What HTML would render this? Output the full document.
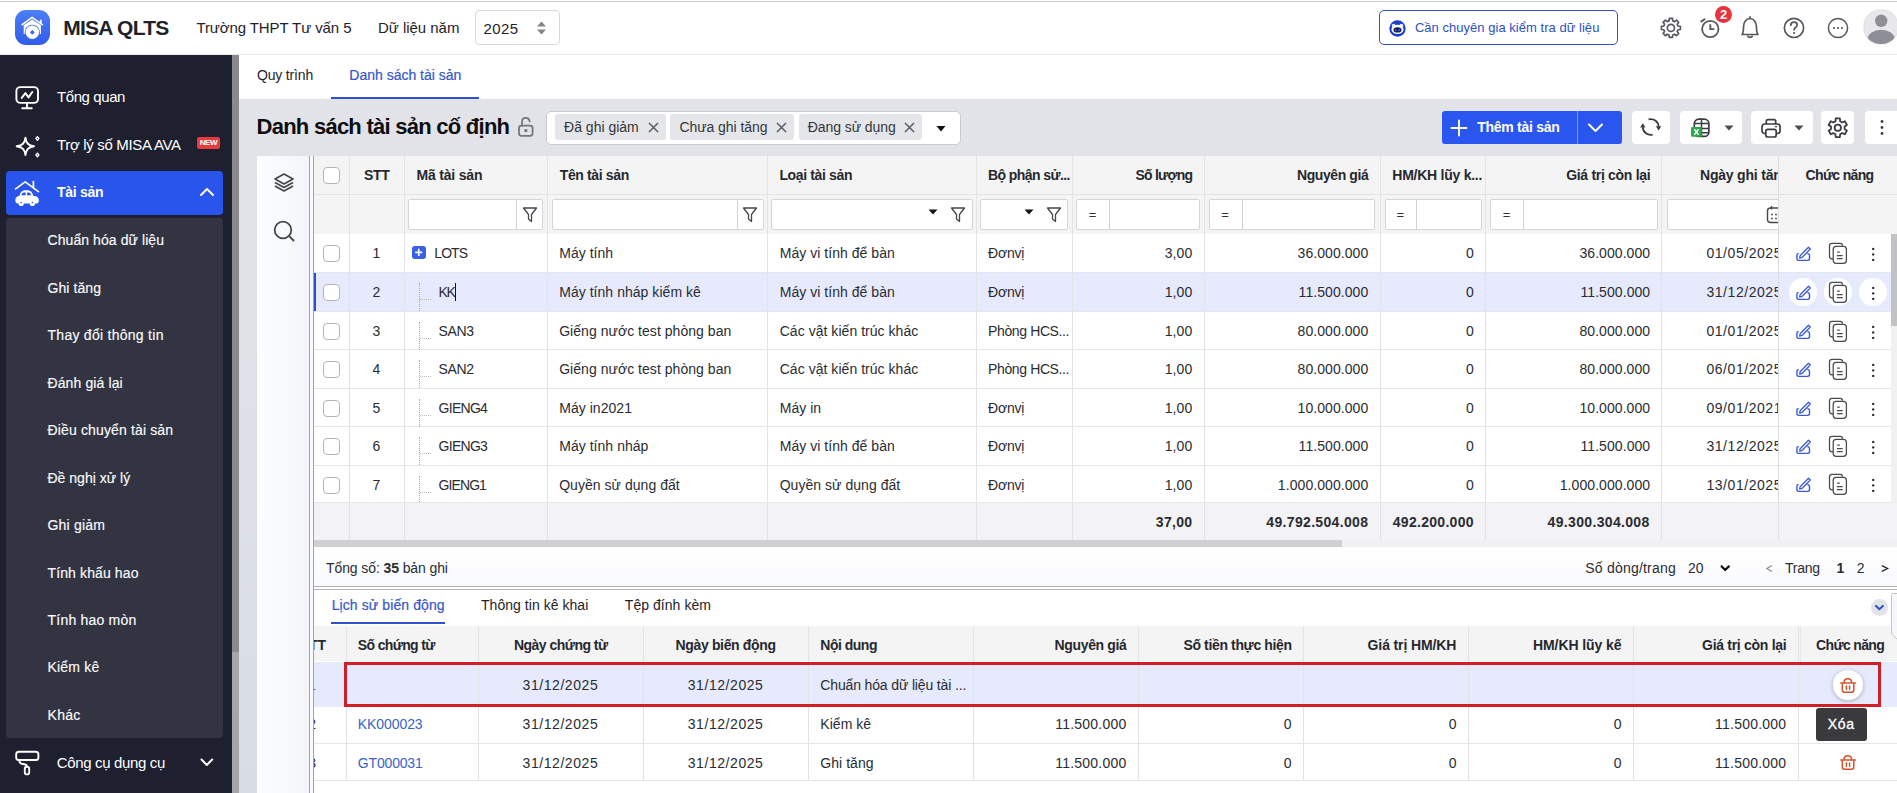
<!DOCTYPE html><html><head><meta charset="utf-8"><style>
html,body{margin:0;padding:0;width:1897px;height:793px;overflow:hidden;background:#fff;font-family:"Liberation Sans", sans-serif;position:relative}
.t{position:absolute;white-space:nowrap}
.b{position:absolute;box-sizing:border-box}
svg.b{overflow:visible}
</style></head><body>
<div class="b" style="left:0px;top:0px;width:1897px;height:54px;background:#fff"></div>
<div class="b" style="left:0px;top:1px;width:1897px;height:1px;background:#cfcfcf"></div>
<div class="b" style="left:0px;top:54px;width:1897px;height:1px;background:#e6e6e6"></div>
<div class="b" style="left:15.3px;top:10px;width:34.5px;height:34.5px;border-radius:11px;background:linear-gradient(180deg,#4d7ff7 0%,#2f5ceb 100%)"></div>
<svg class="b" style="left:15.3px;top:10px;" width="34.5" height="34.5" viewBox="0 0 34.5 34.5" fill="none"><path d="M7.2 14.6 L17.1 7.4 L27.3 14.6" stroke="#fff" stroke-width="1.7" stroke-linecap="round" stroke-linejoin="round"/>
<rect x="24.9" y="9.8" width="1.8" height="4" fill="#fff"/>
<path d="M8.7 15.2 L17.1 9.4 L25.9 15.2 V24 H8.7 Z" fill="#fff"/>
<circle cx="17.3" cy="22.3" r="7.6" fill="#3a66ee"/>
<circle cx="17.3" cy="22.3" r="6.7" fill="#fff"/>
<path d="M17.3 19.9 L19.7 22.3 L17.3 24.7 L14.9 22.3 Z" fill="#3a66ee"/></svg>
<div class="t" style="left:63.3px;top:17.02px;font-size:21px;line-height:21px;font-weight:700;color:#1f2229;letter-spacing:-0.756px;">MISA QLTS</div>
<div class="t" style="left:196.4px;top:20.20px;font-size:15px;line-height:15px;font-weight:400;color:#1f2229;letter-spacing:-0.096px;">Trường THPT Tư vấn 5</div>
<div class="t" style="left:378px;top:20.20px;font-size:15px;line-height:15px;font-weight:400;color:#1f2229;letter-spacing:-0.032px;">Dữ liệu năm</div>
<div class="b" style="left:474.5px;top:10px;width:85.0px;height:34.7px;border:1px solid #d9d9d9;border-radius:4px;background:#fff"></div>
<div class="t" style="left:483.6px;top:21.10px;font-size:15px;line-height:15px;font-weight:400;color:#1f2229;letter-spacing:0.356px;">2025</div>
<svg class="b" style="left:536px;top:20px;" width="11" height="16" viewBox="0 0 11 16" fill="none"><path d="M1 6.5 L5.5 1.5 L10 6.5 Z" fill="#858585"/><path d="M1 9.5 L5.5 14.5 L10 9.5 Z" fill="#858585"/></svg>
<div class="b" style="left:1379px;top:10px;width:239px;height:35px;border:1.5px solid #3552c4;border-radius:5px;background:#fff"></div>
<svg class="b" style="left:1389px;top:19.5px;" width="17" height="17" viewBox="0 0 17 17" fill="none"><circle cx="8.5" cy="8.5" r="8.2" fill="#1b40cf"/><circle cx="4.6" cy="5.6" r="1.9" fill="#e8eeff"/><circle cx="12.4" cy="5.6" r="1.9" fill="#e8eeff"/><ellipse cx="8.5" cy="9.4" rx="6" ry="4.7" fill="#fff"/><ellipse cx="8.5" cy="9.9" rx="4" ry="2.6" fill="#0c1a66"/><path d="M5.9 10.6 Q6.7 9.2 7.5 10.6 M9.5 10.6 Q10.3 9.2 11.1 10.6" stroke="#c8d4ff" stroke-width="0.8"/></svg>
<div class="t" style="left:1414.9px;top:21.20px;font-size:13px;line-height:13px;font-weight:400;color:#2d4fc7;letter-spacing:0.030px;">Cần chuyên gia kiểm tra dữ liệu</div>
<svg class="b" style="left:0px;top:0px;pointer-events:none" width="1897" height="55" viewBox="0 0 1897 55" fill="none"><path d="M1669.03 20.85 L1669.32 18.43 L1672.48 18.43 L1672.77 20.85 L1674.56 21.59 L1676.48 20.09 L1678.71 22.32 L1677.21 24.24 L1677.95 26.03 L1680.37 26.32 L1680.37 29.48 L1677.95 29.77 L1677.21 31.56 L1678.71 33.48 L1676.48 35.71 L1674.56 34.21 L1672.77 34.95 L1672.48 37.37 L1669.32 37.37 L1669.03 34.95 L1667.24 34.21 L1665.32 35.71 L1663.09 33.48 L1664.59 31.56 L1663.85 29.77 L1661.43 29.48 L1661.43 26.32 L1663.85 26.03 L1664.59 24.24 L1663.09 22.32 L1665.32 20.09 L1667.24 21.59 Z" stroke="#58595e" stroke-width="1.7" stroke-linejoin="round"/><circle cx="1670.9" cy="27.9" r="3.55" stroke="#58595e" stroke-width="1.7"/></svg>
<svg class="b" style="left:1690px;top:10px;" width="40" height="36" viewBox="0 0 40 36" fill="none"><circle cx="20.3" cy="19" r="8.2" stroke="#58595e" stroke-width="1.8"/><path d="M20.3 15.3 V19.1 H23.4" stroke="#58595e" stroke-width="1.9" stroke-linecap="square"/><path d="M11.4 11.4 L14.6 9.2" stroke="#58595e" stroke-width="2" stroke-linecap="round"/></svg>
<div class="b" style="left:1715px;top:6.3px;width:17.2px;height:17.2px;border-radius:50%;background:#e9333d;color:#fff;font-size:13px;font-weight:700;line-height:17.2px;text-align:center">2</div>
<svg class="b" style="left:1738px;top:15px;" width="24" height="26" viewBox="0 0 24 26" fill="none"><path d="M4 19.5 C5.5 18 5.5 16 5.5 12 C5.5 7.2 8.2 3.5 12 3.5 C15.8 3.5 18.5 7.2 18.5 12 C18.5 16 18.5 18 20 19.5 Z" stroke="#58595e" stroke-width="1.7" stroke-linejoin="round"/><path d="M9.5 20.5 A2.6 2.6 0 0 0 14.5 20.5" stroke="#58595e" stroke-width="1.7"/><path d="M12 1.8 V3.5" stroke="#58595e" stroke-width="1.7" stroke-linecap="round"/></svg>
<svg class="b" style="left:1780px;top:14px;" width="28" height="28" viewBox="0 0 28 28" fill="none"><circle cx="14" cy="13.9" r="9.6" stroke="#58595e" stroke-width="1.7"/><path d="M10.8 11.2 C10.8 9.2 12.3 8.1 14 8.1 C15.8 8.1 17.2 9.3 17.2 11 C17.2 13.3 14.1 13.3 14.1 15.8" stroke="#58595e" stroke-width="1.7" stroke-linecap="round"/><circle cx="14.1" cy="19" r="1.1" fill="#58595e"/></svg>
<svg class="b" style="left:1824px;top:14px;" width="28" height="28" viewBox="0 0 28 28" fill="none"><circle cx="14" cy="14" r="9.6" stroke="#58595e" stroke-width="1.5"/><circle cx="10" cy="14" r="1.1" fill="#58595e"/><circle cx="14" cy="14" r="1.1" fill="#58595e"/><circle cx="18" cy="14" r="1.1" fill="#58595e"/></svg>
<div class="b" style="left:1864.4px;top:10.4px;width:33.2px;height:33.2px;border-radius:50%;background:#e8e8ec;overflow:hidden;box-shadow:0 0 1.5px rgba(0,0,0,0.35)"><svg width="34" height="34" viewBox="0 0 34 34" style="position:absolute;left:0;top:0"><circle cx="17.2" cy="10.8" r="6.2" fill="#8d8e96"/><ellipse cx="17.2" cy="28.8" rx="13.5" ry="9" fill="#8d8e96"/></svg></div>
<div class="b" style="left:0px;top:55px;width:232px;height:738px;background:#1e1f2f"></div>
<div class="b" style="left:232px;top:55px;width:7px;height:738px;background:#a6a6a6"></div>
<div class="b" style="left:232px;top:55px;width:7px;height:597px;background:#8a8a8a"></div>
<svg class="b" style="left:13px;top:85px;" width="28" height="26" viewBox="0 0 28 26" fill="none"><rect x="3.4" y="2.1" width="21.6" height="15.8" rx="4" stroke="#ffffff" stroke-width="1.9"/><path d="M14 18 V22.8 M9.2 23.2 H18.8" stroke="#ffffff" stroke-width="1.9" stroke-linecap="round"/><path d="M8.7 12.9 L12.4 8.1 L15.5 12.4 L19.3 7" stroke="#ffffff" stroke-width="1.9" stroke-linecap="round" stroke-linejoin="round"/></svg>
<div class="t" style="left:57px;top:89.30px;font-size:15px;line-height:15px;font-weight:400;color:#fff;letter-spacing:-0.415px;">Tổng quan</div>
<svg class="b" style="left:14px;top:134px;" width="28" height="28" viewBox="0 0 28 28" fill="none"><path d="M11.45 3.6 C12.3 9.3 14.2 11.4 20 12.3 C14.2 13.2 12.3 15.3 11.45 21.1 C10.6 15.3 8.7 13.2 2.7 12.3 C8.7 11.4 10.6 9.3 11.45 3.6 Z" stroke="#ffffff" stroke-width="1.9" stroke-linejoin="round"/><path d="M23.4 2.6 L25 4.4 L23.4 6.2 L21.8 4.4 Z" stroke="#ffffff" stroke-width="1.3" stroke-linejoin="round"/><path d="M23.4 19.1 L25 20.9 L23.4 22.7 L21.8 20.9 Z" stroke="#ffffff" stroke-width="1.3" stroke-linejoin="round"/></svg>
<div class="t" style="left:57px;top:137.30px;font-size:15px;line-height:15px;font-weight:400;color:#fff;letter-spacing:-0.327px;">Trợ lý số MISA AVA</div>
<div class="b" style="left:197px;top:137px;width:22.8px;height:12px;border-radius:2.5px;background:#e63b3f;color:#fff;font-size:8px;font-weight:700;line-height:12px;text-align:center;letter-spacing:-0.4px">NEW</div>
<div class="b" style="left:6px;top:171.3px;width:217px;height:43.69999999999999px;background:#2a55ec;border-radius:4px"></div>
<svg class="b" style="left:13px;top:178px;" width="28" height="30" viewBox="0 0 28 30" fill="none"><path d="M2.6 10.9 L12.2 3.9 L25.4 13.6" stroke="#ffffff" stroke-width="1.7" stroke-linecap="round" stroke-linejoin="round"/><path d="M20.4 3.6 V9.5" stroke="#ffffff" stroke-width="1.7" stroke-linecap="round"/><path d="M2.3 22.5 C2.3 19.6 3.8 18.2 6.5 17.8 C7.3 14.6 8.8 12.3 12.4 12.3 H14.6 C17.8 12.3 19.3 14.4 20.3 17.8 C23.8 18.1 25.9 19.4 25.9 22.4 C25.9 24.4 24.8 25.5 23 25.5 H5.2 C3.4 25.5 2.3 24.4 2.3 22.5 Z" fill="#ffffff"/><circle cx="8.2" cy="25.4" r="2.6" fill="#ffffff"/><circle cx="19.4" cy="25.4" r="2.6" fill="#ffffff"/><circle cx="8.2" cy="24.5" r="0.8" fill="#2a55ec"/><circle cx="19.4" cy="24.5" r="0.8" fill="#2a55ec"/><path d="M8.3 17.2 C8.8 15.4 9.6 14.5 10.9 14.5 H12.7 V17.2 Z M14.1 14.5 H15.6 C16.8 14.5 17.6 15.4 18.2 17.2 H14.1 Z" fill="#2a55ec"/></svg>
<div class="t" style="left:57px;top:184.65px;font-size:14px;line-height:14px;font-weight:700;color:#fff;letter-spacing:-0.264px;">Tài sản</div>
<svg class="b" style="left:198px;top:185px;" width="18" height="14" viewBox="0 0 18 14" fill="none"><path d="M3 10 L9 4 L15 10" stroke="#ffffff" stroke-width="2" stroke-linecap="round" stroke-linejoin="round"/></svg>
<div class="b" style="left:6px;top:217.7px;width:217px;height:520.0px;background:#323442;border-radius:4px"></div>
<div class="t" style="left:47.5px;top:233.15px;font-size:14px;line-height:14px;font-weight:400;color:#fafafc;letter-spacing:0.080px;-webkit-text-stroke:0.15px #fafafc">Chuẩn hóa dữ liệu</div>
<div class="t" style="left:47.5px;top:280.63px;font-size:14px;line-height:14px;font-weight:400;color:#fafafc;letter-spacing:0.083px;-webkit-text-stroke:0.15px #fafafc">Ghi tăng</div>
<div class="t" style="left:47.5px;top:328.11px;font-size:14px;line-height:14px;font-weight:400;color:#fafafc;letter-spacing:0.272px;-webkit-text-stroke:0.15px #fafafc">Thay đổi thông tin</div>
<div class="t" style="left:47.5px;top:375.59px;font-size:14px;line-height:14px;font-weight:400;color:#fafafc;letter-spacing:0.114px;-webkit-text-stroke:0.15px #fafafc">Đánh giá lại</div>
<div class="t" style="left:47.5px;top:423.07px;font-size:14px;line-height:14px;font-weight:400;color:#fafafc;letter-spacing:0.144px;-webkit-text-stroke:0.15px #fafafc">Điều chuyển tài sản</div>
<div class="t" style="left:47.5px;top:470.55px;font-size:14px;line-height:14px;font-weight:400;color:#fafafc;letter-spacing:0.013px;-webkit-text-stroke:0.15px #fafafc">Đề nghị xử lý</div>
<div class="t" style="left:47.5px;top:518.03px;font-size:14px;line-height:14px;font-weight:400;color:#fafafc;letter-spacing:0.184px;-webkit-text-stroke:0.15px #fafafc">Ghi giảm</div>
<div class="t" style="left:47.5px;top:565.51px;font-size:14px;line-height:14px;font-weight:400;color:#fafafc;letter-spacing:0.122px;-webkit-text-stroke:0.15px #fafafc">Tính khấu hao</div>
<div class="t" style="left:47.5px;top:612.99px;font-size:14px;line-height:14px;font-weight:400;color:#fafafc;letter-spacing:0.217px;-webkit-text-stroke:0.15px #fafafc">Tính hao mòn</div>
<div class="t" style="left:47.5px;top:660.47px;font-size:14px;line-height:14px;font-weight:400;color:#fafafc;letter-spacing:0.203px;-webkit-text-stroke:0.15px #fafafc">Kiểm kê</div>
<div class="t" style="left:47.5px;top:707.95px;font-size:14px;line-height:14px;font-weight:400;color:#fafafc;letter-spacing:0.320px;-webkit-text-stroke:0.15px #fafafc">Khác</div>
<svg class="b" style="left:13px;top:748px;" width="28" height="30" viewBox="0 0 28 30" fill="none"><rect x="3.2" y="3.8" width="22.2" height="8.2" rx="2.6" stroke="#ffffff" stroke-width="1.9"/><path d="M6.5 12 V13.2 Q6.5 15.4 8.8 15.8 L12.3 16.5 Q14 16.9 14 18.8" stroke="#ffffff" stroke-width="1.9"/><rect x="11.8" y="18.8" width="4.4" height="7.6" rx="2.2" stroke="#ffffff" stroke-width="1.9"/></svg>
<div class="t" style="left:56.7px;top:755.30px;font-size:15px;line-height:15px;font-weight:400;color:#fff;letter-spacing:-0.341px;">Công cụ dụng cụ</div>
<svg class="b" style="left:198px;top:755px;" width="18" height="14" viewBox="0 0 18 14" fill="none"><path d="M3.5 4.5 L8.8 10 L14.2 4.5" stroke="#ffffff" stroke-width="2" stroke-linecap="round" stroke-linejoin="round"/></svg>
<div class="b" style="left:239px;top:55px;width:1658px;height:738px;background:linear-gradient(180deg,#e3e4e9 0%,#dde0e7 60%,#d8dce4 100%)"></div>
<div class="b" style="left:239px;top:55px;width:1658px;height:44px;background:#fff"></div>
<div class="t" style="left:257px;top:68.15px;font-size:14px;line-height:14px;font-weight:400;color:#1f2229;letter-spacing:-0.177px;">Quy trình</div>
<div class="t" style="left:349.3px;top:68.15px;font-size:14px;line-height:14px;font-weight:400;color:#3556cc;letter-spacing:-0.005px;-webkit-text-stroke:0.2px #3556cc">Danh sách tài sản</div>
<div class="b" style="left:331px;top:96.5px;width:148px;height:2.5px;background:#2f52cc"></div>
<div class="t" style="left:256.5px;top:116.08px;font-size:22px;line-height:22px;font-weight:700;color:#0d0d10;letter-spacing:-0.744px;">Danh sách tài sản cố định</div>
<svg class="b" style="left:516px;top:115px;" width="20" height="22" viewBox="0 0 20 22" fill="none"><rect x="3" y="10.6" width="13.6" height="10.2" rx="2.5" stroke="#74767c" stroke-width="1.8"/><path d="M6 10.6 V7 C6 4.3 7.8 2.9 9.8 2.9 C11.8 2.9 13.3 4.2 13.6 6.4" stroke="#74767c" stroke-width="1.8" stroke-linecap="round"/><circle cx="9.8" cy="15.6" r="1.7" fill="#74767c"/></svg>
<div class="b" style="left:545.5px;top:110.5px;width:415.0px;height:34.0px;background:#fff;border:1px solid #c6c9cf;border-radius:5px"></div>
<div class="b" style="left:555px;top:114px;width:111px;height:26px;background:#e4e6ea;border-radius:3px"></div>
<div class="t" style="left:564.1px;top:119.85px;font-size:14px;line-height:14px;font-weight:400;color:#34363b;letter-spacing:-0.009px;">Đã ghi giảm</div>
<svg class="b" style="left:648px;top:121.5px;" width="11" height="11" viewBox="0 0 11 11" fill="none"><path d="M1 1 L10 10 M10 1 L1 10" stroke="#5a5c62" stroke-width="1.5"/></svg>
<div class="b" style="left:670px;top:114px;width:123.70000000000005px;height:26px;background:#e4e6ea;border-radius:3px"></div>
<div class="t" style="left:679.5px;top:119.85px;font-size:14px;line-height:14px;font-weight:400;color:#34363b;letter-spacing:-0.067px;">Chưa ghi tăng</div>
<svg class="b" style="left:775.5px;top:121.5px;" width="11" height="11" viewBox="0 0 11 11" fill="none"><path d="M1 1 L10 10 M10 1 L1 10" stroke="#5a5c62" stroke-width="1.5"/></svg>
<div class="b" style="left:799.2px;top:114px;width:122.79999999999995px;height:26px;background:#e4e6ea;border-radius:3px"></div>
<div class="t" style="left:807.8px;top:119.85px;font-size:14px;line-height:14px;font-weight:400;color:#34363b;letter-spacing:-0.080px;">Đang sử dụng</div>
<svg class="b" style="left:904px;top:121.5px;" width="11" height="11" viewBox="0 0 11 11" fill="none"><path d="M1 1 L10 10 M10 1 L1 10" stroke="#5a5c62" stroke-width="1.5"/></svg>
<svg class="b" style="left:936px;top:124.5px;" width="10" height="7" viewBox="0 0 10 7" fill="none"><path d="M0.5 1 H9.5 L5 6.5 Z" fill="#111"/></svg>
<div class="b" style="left:1442px;top:110.5px;width:180px;height:33.80000000000001px;background:#2a55ef;border-radius:3px"></div>
<div class="b" style="left:1576.5px;top:110.5px;width:1.0px;height:33.80000000000001px;background:#7f9af0"></div>
<svg class="b" style="left:1450px;top:119px;" width="18" height="18" viewBox="0 0 18 18" fill="none"><path d="M9 1.5 V16.5 M1.5 9 H16.5" stroke="#fff" stroke-width="1.9" stroke-linecap="round"/></svg>
<div class="t" style="left:1477.3px;top:120.05px;font-size:14px;line-height:14px;font-weight:700;color:#fff;letter-spacing:-0.283px;">Thêm tài sản</div>
<svg class="b" style="left:1587px;top:122px;" width="17" height="12" viewBox="0 0 17 12" fill="none"><path d="M2 2.5 L8.5 9 L15 2.5" stroke="#fff" stroke-width="2" stroke-linecap="round" stroke-linejoin="round"/></svg>
<div class="b" style="left:1632px;top:110.5px;width:38.200000000000045px;height:33.80000000000001px;background:#fff;border-radius:4px"></div>
<div class="b" style="left:1679.7px;top:110.5px;width:62.299999999999955px;height:33.80000000000001px;background:#fff;border-radius:4px"></div>
<div class="b" style="left:1751px;top:110.5px;width:61.799999999999955px;height:33.80000000000001px;background:#fff;border-radius:4px"></div>
<div class="b" style="left:1821px;top:110.5px;width:33.299999999999955px;height:33.80000000000001px;background:#fff;border-radius:4px"></div>
<div class="b" style="left:1865px;top:110.5px;width:40px;height:33.80000000000001px;background:#fff;border-radius:4px"></div>
<svg class="b" style="left:1640px;top:117px;" width="22" height="22" viewBox="0 0 22 22" fill="none"><path d="M8.56 2.37 A7.9 7.9 0 0 1 18.6 9.6" stroke="#3a3c42" stroke-width="1.8"/><path d="M15.9 9.3 H21.3 L18.6 13.6 Z" fill="#3a3c42"/><path d="M12.64 17.63 A7.9 7.9 0 0 1 2.8 10.2" stroke="#3a3c42" stroke-width="1.8"/><path d="M0.1 10.6 H5.5 L2.8 6.2 Z" fill="#3a3c42"/></svg>
<svg class="b" style="left:1689px;top:117px;" width="24" height="22" viewBox="0 0 24 22" fill="none"><rect x="5.3" y="2.2" width="14.6" height="17.2" rx="4.5" stroke="#3a3c42" stroke-width="1.7"/><path d="M12.5 2.2 V19.4 M5.3 6.6 H19.9 M5.3 11.6 H19.9 M5.3 15.7 H19.9" stroke="#3a3c42" stroke-width="1.5"/><rect x="2" y="10" width="10.8" height="9.8" rx="1" fill="#2ea84a"/><path d="M5.3 12.3 L9.5 17.7 M9.5 12.3 L5.3 17.7" stroke="#fff" stroke-width="1.4"/></svg>
<svg class="b" style="left:1724px;top:125px;" width="10" height="6" viewBox="0 0 10 6" fill="none"><path d="M0.5 0.5 H9.5 L5 5.5 Z" fill="#4a4c52"/></svg>
<svg class="b" style="left:1760px;top:117px;" width="22" height="22" viewBox="0 0 22 22" fill="none"><path d="M6.3 7 V4.3 C6.3 3.3 7 2.6 8 2.6 H14 C15 2.6 15.7 3.3 15.7 4.3 V7" stroke="#3a3c42" stroke-width="1.7"/><path d="M6 16.5 H4.8 C3.2 16.5 2 15.3 2 13.7 V9.8 C2 8.2 3.2 7 4.8 7 H17.2 C18.8 7 20 8.2 20 9.8 V13.7 C20 15.3 18.8 16.5 17.2 16.5 H16" stroke="#3a3c42" stroke-width="1.7"/><rect x="5.8" y="12.3" width="10.4" height="7.7" rx="2" fill="#fff" stroke="#3a3c42" stroke-width="1.7"/><path d="M15 9.6 H17" stroke="#3a3c42" stroke-width="1.4"/></svg>
<svg class="b" style="left:1794px;top:125px;" width="10" height="6" viewBox="0 0 10 6" fill="none"><path d="M0.5 0.5 H9.5 L5 5.5 Z" fill="#4a4c52"/></svg>
<svg class="b" style="left:0px;top:0px;pointer-events:none" width="1897" height="150" viewBox="0 0 1897 150" fill="none"><path d="M1835.46 121.30 L1835.71 118.43 L1839.89 118.43 L1840.14 121.30 L1842.26 122.52 L1844.87 121.30 L1846.96 124.93 L1844.60 126.58 L1844.60 129.02 L1846.96 130.67 L1844.87 134.30 L1842.26 133.08 L1840.14 134.30 L1839.89 137.17 L1835.71 137.17 L1835.46 134.30 L1833.34 133.08 L1830.73 134.30 L1828.64 130.67 L1831.00 129.02 L1831.00 126.58 L1828.64 124.93 L1830.73 121.30 L1833.34 122.52 Z" stroke="#3a3c42" stroke-width="1.8" stroke-linejoin="round"/><circle cx="1837.8" cy="127.8" r="3.17" stroke="#3a3c42" stroke-width="1.8"/></svg>
<svg class="b" style="left:1878px;top:117px;" width="8" height="22" viewBox="0 0 8 22" fill="none"><circle cx="4" cy="4.5" r="1.4" fill="#3a3c42"/><circle cx="4" cy="10.5" r="1.4" fill="#3a3c42"/><circle cx="4" cy="16.5" r="1.4" fill="#3a3c42"/></svg>
<div class="b" style="left:257px;top:156px;width:1640px;height:637px;background:#fff"></div>
<div class="b" style="left:257px;top:156px;width:52px;height:637px;background:linear-gradient(90deg,#fcfdff 0%,#f3f5f8 100%)"></div>
<div class="b" style="left:309px;top:156px;width:1px;height:637px;background:#a4a6aa"></div>
<div class="b" style="left:310px;top:156px;width:3px;height:637px;background:#f8fafd"></div>
<div class="b" style="left:313px;top:156px;width:1px;height:637px;background:#a2a2a5"></div>
<svg class="b" style="left:272px;top:171px;" width="24" height="24" viewBox="0 0 24 24" fill="none"><path d="M12 3 L21 8 L12 13 L3 8 Z" stroke="#45474d" stroke-width="1.7" stroke-linejoin="round"/><path d="M3 11.5 L12 16.5 L21 11.5" stroke="#45474d" stroke-width="1.7" stroke-linejoin="round"/><path d="M3 15 L12 20 L21 15" stroke="#45474d" stroke-width="1.7" stroke-linejoin="round"/></svg>
<svg class="b" style="left:272px;top:219px;" width="24" height="24" viewBox="0 0 24 24" fill="none"><circle cx="11" cy="11" r="8.3" stroke="#45474d" stroke-width="1.8"/><path d="M17.2 17.2 L21.5 21.5" stroke="#45474d" stroke-width="1.9" stroke-linecap="round"/></svg>
<div class="b" style="left:314px;top:156px;width:1583px;height:78px;background:#f4f4f5"></div>
<div class="b" style="left:314px;top:194px;width:1583px;height:1px;background:#e3e3e6"></div>
<div class="b" style="left:349px;top:156px;width:1px;height:384px;background:#e3e3e6"></div>
<div class="b" style="left:404px;top:156px;width:1px;height:384px;background:#e3e3e6"></div>
<div class="b" style="left:547px;top:156px;width:1px;height:384px;background:#e3e3e6"></div>
<div class="b" style="left:767px;top:156px;width:1px;height:384px;background:#e3e3e6"></div>
<div class="b" style="left:976px;top:156px;width:1px;height:384px;background:#e3e3e6"></div>
<div class="b" style="left:1072px;top:156px;width:1px;height:384px;background:#e3e3e6"></div>
<div class="b" style="left:1204px;top:156px;width:1px;height:384px;background:#e3e3e6"></div>
<div class="b" style="left:1380px;top:156px;width:1px;height:384px;background:#e3e3e6"></div>
<div class="b" style="left:1485px;top:156px;width:1px;height:384px;background:#e3e3e6"></div>
<div class="b" style="left:1661px;top:156px;width:1px;height:384px;background:#e3e3e6"></div>
<div class="b" style="left:1778px;top:156px;width:1px;height:384px;background:#e3e3e6"></div>
<div class="t" style="left:-123.19999999999999px;width:1000px;text-align:center;top:168.45px;font-size:14px;line-height:14px;font-weight:700;color:#26282e;letter-spacing:-0.251px;">STT</div>
<div class="t" style="left:416.5px;top:168.45px;font-size:14px;line-height:14px;font-weight:700;color:#26282e;letter-spacing:-0.190px;">Mã tài sản</div>
<div class="t" style="left:559.7px;top:168.45px;font-size:14px;line-height:14px;font-weight:700;color:#26282e;letter-spacing:-0.358px;">Tên tài sản</div>
<div class="t" style="left:779.4px;top:168.45px;font-size:14px;line-height:14px;font-weight:700;color:#26282e;letter-spacing:-0.361px;">Loại tài sản</div>
<div class="t" style="left:987.9px;top:168.45px;font-size:14px;line-height:14px;font-weight:700;color:#26282e;letter-spacing:-0.576px;">Bộ phận sử...</div>
<div class="t" style="right:704.7px;top:168.45px;font-size:14px;line-height:14px;font-weight:700;color:#26282e;letter-spacing:-0.747px;">Số lượng</div>
<div class="t" style="right:528.7px;top:168.45px;font-size:14px;line-height:14px;font-weight:700;color:#26282e;letter-spacing:-0.407px;">Nguyên giá</div>
<div class="t" style="left:1392.3px;top:168.45px;font-size:14px;line-height:14px;font-weight:700;color:#26282e;letter-spacing:-0.254px;">HM/KH lũy k...</div>
<div class="t" style="right:246.5999999999999px;top:168.45px;font-size:14px;line-height:14px;font-weight:700;color:#26282e;letter-spacing:-0.294px;">Giá trị còn lại</div>
<div class="t" style="left:1805.6px;top:168.45px;font-size:14px;line-height:14px;font-weight:700;color:#26282e;letter-spacing:-0.680px;">Chức năng</div>
<div class="b" style="left:323px;top:166.5px;width:17px;height:17.0px;background:#fff;border:1px solid #b5b5b9;border-radius:4px"></div>
<div class="b" style="left:408.4px;top:199.3px;width:135.10000000000002px;height:30.299999999999983px;background:#fff;border:1px solid #d6d6d9;border-radius:2px"></div>
<div class="b" style="left:516px;top:199.3px;width:1px;height:30.299999999999983px;background:#d3d3d7"></div>
<svg class="b" style="left:522px;top:205.5px;" width="16" height="18" viewBox="0 0 16 18" fill="none"><path d="M1.5 2 H14.5 L9.5 8.5 V15.5 L6.5 13 V8.5 Z" stroke="#45474d" stroke-width="1.3" stroke-linejoin="round"/></svg>
<div class="b" style="left:552px;top:199.3px;width:212px;height:30.299999999999983px;background:#fff;border:1px solid #d6d6d9;border-radius:2px"></div>
<div class="b" style="left:736.5px;top:199.3px;width:1.0px;height:30.299999999999983px;background:#d3d3d7"></div>
<svg class="b" style="left:742px;top:205.5px;" width="16" height="18" viewBox="0 0 16 18" fill="none"><path d="M1.5 2 H14.5 L9.5 8.5 V15.5 L6.5 13 V8.5 Z" stroke="#45474d" stroke-width="1.3" stroke-linejoin="round"/></svg>
<div class="b" style="left:771.4px;top:199.3px;width:201.30000000000007px;height:30.299999999999983px;background:#fff;border:1px solid #d6d6d9;border-radius:2px"></div>
<svg class="b" style="left:928px;top:209px;" width="10" height="6" viewBox="0 0 10 6" fill="none"><path d="M0.5 0.5 H9.5 L5 5.5 Z" fill="#111"/></svg>
<svg class="b" style="left:949.5px;top:205.5px;" width="16" height="18" viewBox="0 0 16 18" fill="none"><path d="M1.5 2 H14.5 L9.5 8.5 V15.5 L6.5 13 V8.5 Z" stroke="#45474d" stroke-width="1.3" stroke-linejoin="round"/></svg>
<div class="b" style="left:980px;top:199.3px;width:87.5px;height:30.299999999999983px;background:#fff;border:1px solid #d6d6d9;border-radius:2px"></div>
<svg class="b" style="left:1024px;top:209px;" width="10" height="6" viewBox="0 0 10 6" fill="none"><path d="M0.5 0.5 H9.5 L5 5.5 Z" fill="#111"/></svg>
<svg class="b" style="left:1045.5px;top:205.5px;" width="16" height="18" viewBox="0 0 16 18" fill="none"><path d="M1.5 2 H14.5 L9.5 8.5 V15.5 L6.5 13 V8.5 Z" stroke="#45474d" stroke-width="1.3" stroke-linejoin="round"/></svg>
<div class="b" style="left:1076px;top:199.3px;width:123.59999999999991px;height:30.299999999999983px;background:#fff;border:1px solid #d6d6d9;border-radius:2px"></div>
<div class="b" style="left:1109px;top:199.3px;width:1px;height:30.299999999999983px;background:#d3d3d7"></div>
<div class="t" style="left:592.5px;width:1000px;text-align:center;top:207.50px;font-size:13px;line-height:13px;font-weight:400;color:#333;letter-spacing:0px;">=</div>
<div class="b" style="left:1208.6px;top:199.3px;width:166.80000000000018px;height:30.299999999999983px;background:#fff;border:1px solid #d6d6d9;border-radius:2px"></div>
<div class="b" style="left:1241.5px;top:199.3px;width:1.0px;height:30.299999999999983px;background:#d3d3d7"></div>
<div class="t" style="left:725.05px;width:1000px;text-align:center;top:207.50px;font-size:13px;line-height:13px;font-weight:400;color:#333;letter-spacing:0px;">=</div>
<div class="b" style="left:1384.5px;top:199.3px;width:97.09999999999991px;height:30.299999999999983px;background:#fff;border:1px solid #d6d6d9;border-radius:2px"></div>
<div class="b" style="left:1416px;top:199.3px;width:1px;height:30.299999999999983px;background:#d3d3d7"></div>
<div class="t" style="left:900.25px;width:1000px;text-align:center;top:207.50px;font-size:13px;line-height:13px;font-weight:400;color:#333;letter-spacing:0px;">=</div>
<div class="b" style="left:1490px;top:199.3px;width:167.5px;height:30.299999999999983px;background:#fff;border:1px solid #d6d6d9;border-radius:2px"></div>
<div class="b" style="left:1523px;top:199.3px;width:1px;height:30.299999999999983px;background:#d3d3d7"></div>
<div class="t" style="left:1006.5px;width:1000px;text-align:center;top:207.50px;font-size:13px;line-height:13px;font-weight:400;color:#333;letter-spacing:0px;">=</div>
<div class="b" style="left:1661px;top:156px;width:117.5px;height:78px;overflow:hidden">
<div class="t" style="left:39px;top:12.45px;font-size:14px;line-height:14px;font-weight:700;color:#26282e;letter-spacing:-0.2px;">Ngày ghi tăng</div>
<div class="b" style="left:5.5px;top:43.30000000000001px;width:140px;height:30.299999999999983px;background:#fff;border:1px solid #d6d6d9;border-radius:2px"></div>
<svg class="b" style="left:105px;top:49px" width="18" height="20" viewBox="0 0 18 20" fill="none"><rect x="1.5" y="3" width="15" height="14.5" rx="3" stroke="#45474d" stroke-width="1.4"/><path d="M5.5 1 V4.5" stroke="#45474d" stroke-width="1.4"/><circle cx="6" cy="9.5" r="0.9" fill="#45474d"/><circle cx="6" cy="13.5" r="0.9" fill="#45474d"/><circle cx="10" cy="9.5" r="0.9" fill="#45474d"/><circle cx="10" cy="13.5" r="0.9" fill="#45474d"/></svg>
</div>
<div class="b" style="left:314px;top:234px;width:1577px;height:38px;background:#fff"></div>
<div class="b" style="left:314px;top:272px;width:1577px;height:1px;background:#e6e6e9"></div>
<div class="b" style="left:349px;top:234px;width:1px;height:38px;background:#e3e3e6"></div>
<div class="b" style="left:404px;top:234px;width:1px;height:38px;background:#e3e3e6"></div>
<div class="b" style="left:547px;top:234px;width:1px;height:38px;background:#e3e3e6"></div>
<div class="b" style="left:767px;top:234px;width:1px;height:38px;background:#e3e3e6"></div>
<div class="b" style="left:976px;top:234px;width:1px;height:38px;background:#e3e3e6"></div>
<div class="b" style="left:1072px;top:234px;width:1px;height:38px;background:#e3e3e6"></div>
<div class="b" style="left:1204px;top:234px;width:1px;height:38px;background:#e3e3e6"></div>
<div class="b" style="left:1380px;top:234px;width:1px;height:38px;background:#e3e3e6"></div>
<div class="b" style="left:1485px;top:234px;width:1px;height:38px;background:#e3e3e6"></div>
<div class="b" style="left:1661px;top:234px;width:1px;height:38px;background:#e3e3e6"></div>
<div class="b" style="left:1778px;top:234px;width:1px;height:38px;background:#e3e3e6"></div>
<div class="b" style="left:323px;top:244.5px;width:17px;height:17.0px;background:#fff;border:1px solid #b5b5b9;border-radius:4px"></div>
<div class="t" style="left:-123.5px;width:1000px;text-align:center;top:246.15px;font-size:14px;line-height:14px;font-weight:400;color:#2a2c32;letter-spacing:0px;">1</div>
<div class="b" style="left:412.3px;top:246px;width:13.5px;height:12.8px;border-radius:3px;background:#3b5fe7"></div>
<svg class="b" style="left:412.3px;top:246px;" width="13.5" height="12.8" viewBox="0 0 13.5 12.8" fill="none"><path d="M6.75 2.8 V10 M3.2 6.4 H10.3" stroke="#fff" stroke-width="1.6"/></svg>
<div class="t" style="left:434.3px;top:246.15px;font-size:14px;line-height:14px;font-weight:400;color:#2a2c32;letter-spacing:-0.945px;">LOTS</div>
<div class="t" style="left:559.2px;top:246.15px;font-size:14px;line-height:14px;font-weight:400;color:#2a2c32;letter-spacing:0.04px;">Máy tính</div>
<div class="t" style="left:779.7px;top:246.15px;font-size:14px;line-height:14px;font-weight:400;color:#2a2c32;letter-spacing:0.04px;">Máy vi tính để bàn</div>
<div class="t" style="left:988.1px;top:246.15px;font-size:14px;line-height:14px;font-weight:400;color:#2a2c32;letter-spacing:-0.237px;">Đơnvị</div>
<div class="t" style="right:704.7px;top:246.15px;font-size:14px;line-height:14px;font-weight:400;color:#2a2c32;letter-spacing:0.1px;">3,00</div>
<div class="t" style="right:528.7px;top:246.15px;font-size:14px;line-height:14px;font-weight:400;color:#2a2c32;letter-spacing:0.07px;">36.000.000</div>
<div class="t" style="right:423.20000000000005px;top:246.15px;font-size:14px;line-height:14px;font-weight:400;color:#2a2c32;letter-spacing:0px;">0</div>
<div class="t" style="right:246.79999999999995px;top:246.15px;font-size:14px;line-height:14px;font-weight:400;color:#2a2c32;letter-spacing:0.07px;">36.000.000</div>
<div class="b" style="left:1662px;top:234px;width:116px;height:38px;overflow:hidden"><div class="t" style="left:44.40000000000009px;top:12.15px;font-size:14px;line-height:14px;color:#2a2c32;letter-spacing:0.56px">01/05/2025</div></div>
<svg class="b" style="left:1794px;top:243.0px;" width="20" height="20" viewBox="0 0 20 20" fill="none"><path d="M4.3 10.6 Q2.9 10.6 2.9 12 V15.6 Q2.9 17.4 4.7 17.4 H13.7 Q15.5 17.4 15.5 15.6 V12.4 Q15.5 10.8 13.9 10.7" stroke="#3b5bd6" stroke-width="1.4" stroke-linecap="round"/><path d="M5.7 15 L6.13 12.67 L14.48 4.24 L16.32 6.06 L7.97 14.49 Z" stroke="#3b5bd6" stroke-width="1.3" stroke-linejoin="round"/></svg>
<svg class="b" style="left:1828px;top:242.0px;" width="22" height="22" viewBox="0 0 22 22" fill="none"><path d="M5.6 16.85 H4 Q1.5 16.85 1.5 14.35 V3.85 Q1.5 1.35 4 1.35 H12.2 Q14.4 1.35 14.6 3.6" stroke="#48494e" stroke-width="1.25"/><rect x="5.2" y="4.45" width="13.2" height="16.9" rx="3" fill="#fff" stroke="#48494e" stroke-width="1.25"/><path d="M9.2 10.15 H11.8 M8.9 13.55 H14.7 M8.9 16.65 H14.7" stroke="#48494e" stroke-width="1.2"/></svg>
<svg class="b" style="left:1869px;top:243.0px;" width="8" height="20" viewBox="0 0 8 20" fill="none"><circle cx="4.2" cy="5.9" r="1.2" fill="#2a2c32"/><circle cx="4.2" cy="11.4" r="1.2" fill="#2a2c32"/><circle cx="4.2" cy="16.9" r="1.2" fill="#2a2c32"/></svg>
<div class="b" style="left:314px;top:273px;width:1577px;height:38px;background:#e7eafc"></div>
<div class="b" style="left:314px;top:272px;width:1577px;height:1px;background:#e3e5f0"></div>
<div class="b" style="left:314px;top:311px;width:1577px;height:1px;background:#e3e5f0"></div>
<div class="b" style="left:313.5px;top:273px;width:2.5px;height:38px;background:#2a4fd6"></div>
<div class="b" style="left:349px;top:273px;width:1px;height:38px;background:#e3e3e6"></div>
<div class="b" style="left:404px;top:273px;width:1px;height:38px;background:#e3e3e6"></div>
<div class="b" style="left:547px;top:273px;width:1px;height:38px;background:#e3e3e6"></div>
<div class="b" style="left:767px;top:273px;width:1px;height:38px;background:#e3e3e6"></div>
<div class="b" style="left:976px;top:273px;width:1px;height:38px;background:#e3e3e6"></div>
<div class="b" style="left:1072px;top:273px;width:1px;height:38px;background:#e3e3e6"></div>
<div class="b" style="left:1204px;top:273px;width:1px;height:38px;background:#e3e3e6"></div>
<div class="b" style="left:1380px;top:273px;width:1px;height:38px;background:#e3e3e6"></div>
<div class="b" style="left:1485px;top:273px;width:1px;height:38px;background:#e3e3e6"></div>
<div class="b" style="left:1661px;top:273px;width:1px;height:38px;background:#e3e3e6"></div>
<div class="b" style="left:1778px;top:273px;width:1px;height:38px;background:#e3e3e6"></div>
<div class="b" style="left:323px;top:283.5px;width:17px;height:17.0px;background:#fff;border:1px solid #b5b5b9;border-radius:4px"></div>
<div class="t" style="left:-123.5px;width:1000px;text-align:center;top:285.15px;font-size:14px;line-height:14px;font-weight:400;color:#2a2c32;letter-spacing:0px;">2</div>
<div class="b" style="left:419px;top:283px;width:0;height:27.6px;border-left:1px dotted #a8a8a8"></div>
<div class="b" style="left:420px;top:299px;width:11px;height:0;border-top:1px dotted #b8b8b8"></div>
<div class="t" style="left:438.6px;top:285.15px;font-size:14px;line-height:14px;font-weight:400;color:#2a2c32;letter-spacing:-1.344px;">KK</div>
<div class="t" style="left:559.2px;top:285.15px;font-size:14px;line-height:14px;font-weight:400;color:#2a2c32;letter-spacing:0.04px;">Máy tính nháp kiểm kê</div>
<div class="t" style="left:779.7px;top:285.15px;font-size:14px;line-height:14px;font-weight:400;color:#2a2c32;letter-spacing:0.04px;">Máy vi tính để bàn</div>
<div class="t" style="left:988.1px;top:285.15px;font-size:14px;line-height:14px;font-weight:400;color:#2a2c32;letter-spacing:-0.237px;">Đơnvị</div>
<div class="t" style="right:704.7px;top:285.15px;font-size:14px;line-height:14px;font-weight:400;color:#2a2c32;letter-spacing:0.1px;">1,00</div>
<div class="t" style="right:528.7px;top:285.15px;font-size:14px;line-height:14px;font-weight:400;color:#2a2c32;letter-spacing:0.07px;">11.500.000</div>
<div class="t" style="right:423.20000000000005px;top:285.15px;font-size:14px;line-height:14px;font-weight:400;color:#2a2c32;letter-spacing:0px;">0</div>
<div class="t" style="right:246.79999999999995px;top:285.15px;font-size:14px;line-height:14px;font-weight:400;color:#2a2c32;letter-spacing:0.07px;">11.500.000</div>
<div class="b" style="left:1662px;top:273px;width:116px;height:38px;overflow:hidden"><div class="t" style="left:44.40000000000009px;top:12.15px;font-size:14px;line-height:14px;color:#2a2c32;letter-spacing:0.56px">31/12/2025</div></div>
<div class="b" style="left:1789.3px;top:278.3px;width:27.4px;height:27.4px;border-radius:50%;background:#fff"></div>
<div class="b" style="left:1824.3px;top:278.3px;width:27.4px;height:27.4px;border-radius:50%;background:#fff"></div>
<div class="b" style="left:1859.3px;top:278.3px;width:27.4px;height:27.4px;border-radius:50%;background:#fff"></div>
<svg class="b" style="left:1794px;top:282.0px;" width="20" height="20" viewBox="0 0 20 20" fill="none"><path d="M4.3 10.6 Q2.9 10.6 2.9 12 V15.6 Q2.9 17.4 4.7 17.4 H13.7 Q15.5 17.4 15.5 15.6 V12.4 Q15.5 10.8 13.9 10.7" stroke="#3b5bd6" stroke-width="1.4" stroke-linecap="round"/><path d="M5.7 15 L6.13 12.67 L14.48 4.24 L16.32 6.06 L7.97 14.49 Z" stroke="#3b5bd6" stroke-width="1.3" stroke-linejoin="round"/></svg>
<svg class="b" style="left:1828px;top:281.0px;" width="22" height="22" viewBox="0 0 22 22" fill="none"><path d="M5.6 16.85 H4 Q1.5 16.85 1.5 14.35 V3.85 Q1.5 1.35 4 1.35 H12.2 Q14.4 1.35 14.6 3.6" stroke="#48494e" stroke-width="1.25"/><rect x="5.2" y="4.45" width="13.2" height="16.9" rx="3" fill="#fff" stroke="#48494e" stroke-width="1.25"/><path d="M9.2 10.15 H11.8 M8.9 13.55 H14.7 M8.9 16.65 H14.7" stroke="#48494e" stroke-width="1.2"/></svg>
<svg class="b" style="left:1869px;top:282.0px;" width="8" height="20" viewBox="0 0 8 20" fill="none"><circle cx="4.2" cy="5.9" r="1.2" fill="#2a2c32"/><circle cx="4.2" cy="11.4" r="1.2" fill="#2a2c32"/><circle cx="4.2" cy="16.9" r="1.2" fill="#2a2c32"/></svg>
<div class="b" style="left:314px;top:312px;width:1577px;height:37px;background:#fff"></div>
<div class="b" style="left:314px;top:349px;width:1577px;height:1px;background:#e6e6e9"></div>
<div class="b" style="left:349px;top:312px;width:1px;height:37px;background:#e3e3e6"></div>
<div class="b" style="left:404px;top:312px;width:1px;height:37px;background:#e3e3e6"></div>
<div class="b" style="left:547px;top:312px;width:1px;height:37px;background:#e3e3e6"></div>
<div class="b" style="left:767px;top:312px;width:1px;height:37px;background:#e3e3e6"></div>
<div class="b" style="left:976px;top:312px;width:1px;height:37px;background:#e3e3e6"></div>
<div class="b" style="left:1072px;top:312px;width:1px;height:37px;background:#e3e3e6"></div>
<div class="b" style="left:1204px;top:312px;width:1px;height:37px;background:#e3e3e6"></div>
<div class="b" style="left:1380px;top:312px;width:1px;height:37px;background:#e3e3e6"></div>
<div class="b" style="left:1485px;top:312px;width:1px;height:37px;background:#e3e3e6"></div>
<div class="b" style="left:1661px;top:312px;width:1px;height:37px;background:#e3e3e6"></div>
<div class="b" style="left:1778px;top:312px;width:1px;height:37px;background:#e3e3e6"></div>
<div class="b" style="left:323px;top:322.5px;width:17px;height:17.0px;background:#fff;border:1px solid #b5b5b9;border-radius:4px"></div>
<div class="t" style="left:-123.5px;width:1000px;text-align:center;top:324.15px;font-size:14px;line-height:14px;font-weight:400;color:#2a2c32;letter-spacing:0px;">3</div>
<div class="b" style="left:419px;top:322px;width:0;height:27.6px;border-left:1px dotted #a8a8a8"></div>
<div class="b" style="left:420px;top:338px;width:11px;height:0;border-top:1px dotted #b8b8b8"></div>
<div class="t" style="left:438.6px;top:324.15px;font-size:14px;line-height:14px;font-weight:400;color:#2a2c32;letter-spacing:-0.395px;">SAN3</div>
<div class="t" style="left:559.2px;top:324.15px;font-size:14px;line-height:14px;font-weight:400;color:#2a2c32;letter-spacing:0.04px;">Giếng nước test phòng ban</div>
<div class="t" style="left:779.7px;top:324.15px;font-size:14px;line-height:14px;font-weight:400;color:#2a2c32;letter-spacing:0.04px;">Các vật kiến trúc khác</div>
<div class="t" style="left:988.1px;top:324.15px;font-size:14px;line-height:14px;font-weight:400;color:#2a2c32;letter-spacing:-0.384px;">Phòng HCS...</div>
<div class="t" style="right:704.7px;top:324.15px;font-size:14px;line-height:14px;font-weight:400;color:#2a2c32;letter-spacing:0.1px;">1,00</div>
<div class="t" style="right:528.7px;top:324.15px;font-size:14px;line-height:14px;font-weight:400;color:#2a2c32;letter-spacing:0.07px;">80.000.000</div>
<div class="t" style="right:423.20000000000005px;top:324.15px;font-size:14px;line-height:14px;font-weight:400;color:#2a2c32;letter-spacing:0px;">0</div>
<div class="t" style="right:246.79999999999995px;top:324.15px;font-size:14px;line-height:14px;font-weight:400;color:#2a2c32;letter-spacing:0.07px;">80.000.000</div>
<div class="b" style="left:1662px;top:312px;width:116px;height:37px;overflow:hidden"><div class="t" style="left:44.40000000000009px;top:12.15px;font-size:14px;line-height:14px;color:#2a2c32;letter-spacing:0.56px">01/01/2025</div></div>
<svg class="b" style="left:1794px;top:320.5px;" width="20" height="20" viewBox="0 0 20 20" fill="none"><path d="M4.3 10.6 Q2.9 10.6 2.9 12 V15.6 Q2.9 17.4 4.7 17.4 H13.7 Q15.5 17.4 15.5 15.6 V12.4 Q15.5 10.8 13.9 10.7" stroke="#3b5bd6" stroke-width="1.4" stroke-linecap="round"/><path d="M5.7 15 L6.13 12.67 L14.48 4.24 L16.32 6.06 L7.97 14.49 Z" stroke="#3b5bd6" stroke-width="1.3" stroke-linejoin="round"/></svg>
<svg class="b" style="left:1828px;top:319.5px;" width="22" height="22" viewBox="0 0 22 22" fill="none"><path d="M5.6 16.85 H4 Q1.5 16.85 1.5 14.35 V3.85 Q1.5 1.35 4 1.35 H12.2 Q14.4 1.35 14.6 3.6" stroke="#48494e" stroke-width="1.25"/><rect x="5.2" y="4.45" width="13.2" height="16.9" rx="3" fill="#fff" stroke="#48494e" stroke-width="1.25"/><path d="M9.2 10.15 H11.8 M8.9 13.55 H14.7 M8.9 16.65 H14.7" stroke="#48494e" stroke-width="1.2"/></svg>
<svg class="b" style="left:1869px;top:320.5px;" width="8" height="20" viewBox="0 0 8 20" fill="none"><circle cx="4.2" cy="5.9" r="1.2" fill="#2a2c32"/><circle cx="4.2" cy="11.4" r="1.2" fill="#2a2c32"/><circle cx="4.2" cy="16.9" r="1.2" fill="#2a2c32"/></svg>
<div class="b" style="left:314px;top:350px;width:1577px;height:38px;background:#fff"></div>
<div class="b" style="left:314px;top:388px;width:1577px;height:1px;background:#e6e6e9"></div>
<div class="b" style="left:349px;top:350px;width:1px;height:38px;background:#e3e3e6"></div>
<div class="b" style="left:404px;top:350px;width:1px;height:38px;background:#e3e3e6"></div>
<div class="b" style="left:547px;top:350px;width:1px;height:38px;background:#e3e3e6"></div>
<div class="b" style="left:767px;top:350px;width:1px;height:38px;background:#e3e3e6"></div>
<div class="b" style="left:976px;top:350px;width:1px;height:38px;background:#e3e3e6"></div>
<div class="b" style="left:1072px;top:350px;width:1px;height:38px;background:#e3e3e6"></div>
<div class="b" style="left:1204px;top:350px;width:1px;height:38px;background:#e3e3e6"></div>
<div class="b" style="left:1380px;top:350px;width:1px;height:38px;background:#e3e3e6"></div>
<div class="b" style="left:1485px;top:350px;width:1px;height:38px;background:#e3e3e6"></div>
<div class="b" style="left:1661px;top:350px;width:1px;height:38px;background:#e3e3e6"></div>
<div class="b" style="left:1778px;top:350px;width:1px;height:38px;background:#e3e3e6"></div>
<div class="b" style="left:323px;top:360.5px;width:17px;height:17.0px;background:#fff;border:1px solid #b5b5b9;border-radius:4px"></div>
<div class="t" style="left:-123.5px;width:1000px;text-align:center;top:362.15px;font-size:14px;line-height:14px;font-weight:400;color:#2a2c32;letter-spacing:0px;">4</div>
<div class="b" style="left:419px;top:360px;width:0;height:27.6px;border-left:1px dotted #a8a8a8"></div>
<div class="b" style="left:420px;top:376px;width:11px;height:0;border-top:1px dotted #b8b8b8"></div>
<div class="t" style="left:438.6px;top:362.15px;font-size:14px;line-height:14px;font-weight:400;color:#2a2c32;letter-spacing:-0.395px;">SAN2</div>
<div class="t" style="left:559.2px;top:362.15px;font-size:14px;line-height:14px;font-weight:400;color:#2a2c32;letter-spacing:0.04px;">Giếng nước test phòng ban</div>
<div class="t" style="left:779.7px;top:362.15px;font-size:14px;line-height:14px;font-weight:400;color:#2a2c32;letter-spacing:0.04px;">Các vật kiến trúc khác</div>
<div class="t" style="left:988.1px;top:362.15px;font-size:14px;line-height:14px;font-weight:400;color:#2a2c32;letter-spacing:-0.384px;">Phòng HCS...</div>
<div class="t" style="right:704.7px;top:362.15px;font-size:14px;line-height:14px;font-weight:400;color:#2a2c32;letter-spacing:0.1px;">1,00</div>
<div class="t" style="right:528.7px;top:362.15px;font-size:14px;line-height:14px;font-weight:400;color:#2a2c32;letter-spacing:0.07px;">80.000.000</div>
<div class="t" style="right:423.20000000000005px;top:362.15px;font-size:14px;line-height:14px;font-weight:400;color:#2a2c32;letter-spacing:0px;">0</div>
<div class="t" style="right:246.79999999999995px;top:362.15px;font-size:14px;line-height:14px;font-weight:400;color:#2a2c32;letter-spacing:0.07px;">80.000.000</div>
<div class="b" style="left:1662px;top:350px;width:116px;height:38px;overflow:hidden"><div class="t" style="left:44.40000000000009px;top:12.15px;font-size:14px;line-height:14px;color:#2a2c32;letter-spacing:0.56px">06/01/2025</div></div>
<svg class="b" style="left:1794px;top:359.0px;" width="20" height="20" viewBox="0 0 20 20" fill="none"><path d="M4.3 10.6 Q2.9 10.6 2.9 12 V15.6 Q2.9 17.4 4.7 17.4 H13.7 Q15.5 17.4 15.5 15.6 V12.4 Q15.5 10.8 13.9 10.7" stroke="#3b5bd6" stroke-width="1.4" stroke-linecap="round"/><path d="M5.7 15 L6.13 12.67 L14.48 4.24 L16.32 6.06 L7.97 14.49 Z" stroke="#3b5bd6" stroke-width="1.3" stroke-linejoin="round"/></svg>
<svg class="b" style="left:1828px;top:358.0px;" width="22" height="22" viewBox="0 0 22 22" fill="none"><path d="M5.6 16.85 H4 Q1.5 16.85 1.5 14.35 V3.85 Q1.5 1.35 4 1.35 H12.2 Q14.4 1.35 14.6 3.6" stroke="#48494e" stroke-width="1.25"/><rect x="5.2" y="4.45" width="13.2" height="16.9" rx="3" fill="#fff" stroke="#48494e" stroke-width="1.25"/><path d="M9.2 10.15 H11.8 M8.9 13.55 H14.7 M8.9 16.65 H14.7" stroke="#48494e" stroke-width="1.2"/></svg>
<svg class="b" style="left:1869px;top:359.0px;" width="8" height="20" viewBox="0 0 8 20" fill="none"><circle cx="4.2" cy="5.9" r="1.2" fill="#2a2c32"/><circle cx="4.2" cy="11.4" r="1.2" fill="#2a2c32"/><circle cx="4.2" cy="16.9" r="1.2" fill="#2a2c32"/></svg>
<div class="b" style="left:314px;top:389px;width:1577px;height:37px;background:#fff"></div>
<div class="b" style="left:314px;top:426px;width:1577px;height:1px;background:#e6e6e9"></div>
<div class="b" style="left:349px;top:389px;width:1px;height:37px;background:#e3e3e6"></div>
<div class="b" style="left:404px;top:389px;width:1px;height:37px;background:#e3e3e6"></div>
<div class="b" style="left:547px;top:389px;width:1px;height:37px;background:#e3e3e6"></div>
<div class="b" style="left:767px;top:389px;width:1px;height:37px;background:#e3e3e6"></div>
<div class="b" style="left:976px;top:389px;width:1px;height:37px;background:#e3e3e6"></div>
<div class="b" style="left:1072px;top:389px;width:1px;height:37px;background:#e3e3e6"></div>
<div class="b" style="left:1204px;top:389px;width:1px;height:37px;background:#e3e3e6"></div>
<div class="b" style="left:1380px;top:389px;width:1px;height:37px;background:#e3e3e6"></div>
<div class="b" style="left:1485px;top:389px;width:1px;height:37px;background:#e3e3e6"></div>
<div class="b" style="left:1661px;top:389px;width:1px;height:37px;background:#e3e3e6"></div>
<div class="b" style="left:1778px;top:389px;width:1px;height:37px;background:#e3e3e6"></div>
<div class="b" style="left:323px;top:399.5px;width:17px;height:17.0px;background:#fff;border:1px solid #b5b5b9;border-radius:4px"></div>
<div class="t" style="left:-123.5px;width:1000px;text-align:center;top:401.15px;font-size:14px;line-height:14px;font-weight:400;color:#2a2c32;letter-spacing:0px;">5</div>
<div class="b" style="left:419px;top:399px;width:0;height:27.6px;border-left:1px dotted #a8a8a8"></div>
<div class="b" style="left:420px;top:415px;width:11px;height:0;border-top:1px dotted #b8b8b8"></div>
<div class="t" style="left:438.6px;top:401.15px;font-size:14px;line-height:14px;font-weight:400;color:#2a2c32;letter-spacing:-0.734px;">GIENG4</div>
<div class="t" style="left:559.2px;top:401.15px;font-size:14px;line-height:14px;font-weight:400;color:#2a2c32;letter-spacing:0.04px;">Máy in2021</div>
<div class="t" style="left:779.7px;top:401.15px;font-size:14px;line-height:14px;font-weight:400;color:#2a2c32;letter-spacing:0.04px;">Máy in</div>
<div class="t" style="left:988.1px;top:401.15px;font-size:14px;line-height:14px;font-weight:400;color:#2a2c32;letter-spacing:-0.237px;">Đơnvị</div>
<div class="t" style="right:704.7px;top:401.15px;font-size:14px;line-height:14px;font-weight:400;color:#2a2c32;letter-spacing:0.1px;">1,00</div>
<div class="t" style="right:528.7px;top:401.15px;font-size:14px;line-height:14px;font-weight:400;color:#2a2c32;letter-spacing:0.07px;">10.000.000</div>
<div class="t" style="right:423.20000000000005px;top:401.15px;font-size:14px;line-height:14px;font-weight:400;color:#2a2c32;letter-spacing:0px;">0</div>
<div class="t" style="right:246.79999999999995px;top:401.15px;font-size:14px;line-height:14px;font-weight:400;color:#2a2c32;letter-spacing:0.07px;">10.000.000</div>
<div class="b" style="left:1662px;top:389px;width:116px;height:37px;overflow:hidden"><div class="t" style="left:44.40000000000009px;top:12.15px;font-size:14px;line-height:14px;color:#2a2c32;letter-spacing:0.56px">09/01/2021</div></div>
<svg class="b" style="left:1794px;top:397.5px;" width="20" height="20" viewBox="0 0 20 20" fill="none"><path d="M4.3 10.6 Q2.9 10.6 2.9 12 V15.6 Q2.9 17.4 4.7 17.4 H13.7 Q15.5 17.4 15.5 15.6 V12.4 Q15.5 10.8 13.9 10.7" stroke="#3b5bd6" stroke-width="1.4" stroke-linecap="round"/><path d="M5.7 15 L6.13 12.67 L14.48 4.24 L16.32 6.06 L7.97 14.49 Z" stroke="#3b5bd6" stroke-width="1.3" stroke-linejoin="round"/></svg>
<svg class="b" style="left:1828px;top:396.5px;" width="22" height="22" viewBox="0 0 22 22" fill="none"><path d="M5.6 16.85 H4 Q1.5 16.85 1.5 14.35 V3.85 Q1.5 1.35 4 1.35 H12.2 Q14.4 1.35 14.6 3.6" stroke="#48494e" stroke-width="1.25"/><rect x="5.2" y="4.45" width="13.2" height="16.9" rx="3" fill="#fff" stroke="#48494e" stroke-width="1.25"/><path d="M9.2 10.15 H11.8 M8.9 13.55 H14.7 M8.9 16.65 H14.7" stroke="#48494e" stroke-width="1.2"/></svg>
<svg class="b" style="left:1869px;top:397.5px;" width="8" height="20" viewBox="0 0 8 20" fill="none"><circle cx="4.2" cy="5.9" r="1.2" fill="#2a2c32"/><circle cx="4.2" cy="11.4" r="1.2" fill="#2a2c32"/><circle cx="4.2" cy="16.9" r="1.2" fill="#2a2c32"/></svg>
<div class="b" style="left:314px;top:427px;width:1577px;height:38px;background:#fff"></div>
<div class="b" style="left:314px;top:465px;width:1577px;height:1px;background:#e6e6e9"></div>
<div class="b" style="left:349px;top:427px;width:1px;height:38px;background:#e3e3e6"></div>
<div class="b" style="left:404px;top:427px;width:1px;height:38px;background:#e3e3e6"></div>
<div class="b" style="left:547px;top:427px;width:1px;height:38px;background:#e3e3e6"></div>
<div class="b" style="left:767px;top:427px;width:1px;height:38px;background:#e3e3e6"></div>
<div class="b" style="left:976px;top:427px;width:1px;height:38px;background:#e3e3e6"></div>
<div class="b" style="left:1072px;top:427px;width:1px;height:38px;background:#e3e3e6"></div>
<div class="b" style="left:1204px;top:427px;width:1px;height:38px;background:#e3e3e6"></div>
<div class="b" style="left:1380px;top:427px;width:1px;height:38px;background:#e3e3e6"></div>
<div class="b" style="left:1485px;top:427px;width:1px;height:38px;background:#e3e3e6"></div>
<div class="b" style="left:1661px;top:427px;width:1px;height:38px;background:#e3e3e6"></div>
<div class="b" style="left:1778px;top:427px;width:1px;height:38px;background:#e3e3e6"></div>
<div class="b" style="left:323px;top:437.5px;width:17px;height:17.0px;background:#fff;border:1px solid #b5b5b9;border-radius:4px"></div>
<div class="t" style="left:-123.5px;width:1000px;text-align:center;top:439.15px;font-size:14px;line-height:14px;font-weight:400;color:#2a2c32;letter-spacing:0px;">6</div>
<div class="b" style="left:419px;top:437px;width:0;height:27.6px;border-left:1px dotted #a8a8a8"></div>
<div class="b" style="left:420px;top:453px;width:11px;height:0;border-top:1px dotted #b8b8b8"></div>
<div class="t" style="left:438.6px;top:439.15px;font-size:14px;line-height:14px;font-weight:400;color:#2a2c32;letter-spacing:-0.734px;">GIENG3</div>
<div class="t" style="left:559.2px;top:439.15px;font-size:14px;line-height:14px;font-weight:400;color:#2a2c32;letter-spacing:0.04px;">Máy tính nháp</div>
<div class="t" style="left:779.7px;top:439.15px;font-size:14px;line-height:14px;font-weight:400;color:#2a2c32;letter-spacing:0.04px;">Máy vi tính để bàn</div>
<div class="t" style="left:988.1px;top:439.15px;font-size:14px;line-height:14px;font-weight:400;color:#2a2c32;letter-spacing:-0.237px;">Đơnvị</div>
<div class="t" style="right:704.7px;top:439.15px;font-size:14px;line-height:14px;font-weight:400;color:#2a2c32;letter-spacing:0.1px;">1,00</div>
<div class="t" style="right:528.7px;top:439.15px;font-size:14px;line-height:14px;font-weight:400;color:#2a2c32;letter-spacing:0.07px;">11.500.000</div>
<div class="t" style="right:423.20000000000005px;top:439.15px;font-size:14px;line-height:14px;font-weight:400;color:#2a2c32;letter-spacing:0px;">0</div>
<div class="t" style="right:246.79999999999995px;top:439.15px;font-size:14px;line-height:14px;font-weight:400;color:#2a2c32;letter-spacing:0.07px;">11.500.000</div>
<div class="b" style="left:1662px;top:427px;width:116px;height:38px;overflow:hidden"><div class="t" style="left:44.40000000000009px;top:12.15px;font-size:14px;line-height:14px;color:#2a2c32;letter-spacing:0.56px">31/12/2025</div></div>
<svg class="b" style="left:1794px;top:436.0px;" width="20" height="20" viewBox="0 0 20 20" fill="none"><path d="M4.3 10.6 Q2.9 10.6 2.9 12 V15.6 Q2.9 17.4 4.7 17.4 H13.7 Q15.5 17.4 15.5 15.6 V12.4 Q15.5 10.8 13.9 10.7" stroke="#3b5bd6" stroke-width="1.4" stroke-linecap="round"/><path d="M5.7 15 L6.13 12.67 L14.48 4.24 L16.32 6.06 L7.97 14.49 Z" stroke="#3b5bd6" stroke-width="1.3" stroke-linejoin="round"/></svg>
<svg class="b" style="left:1828px;top:435.0px;" width="22" height="22" viewBox="0 0 22 22" fill="none"><path d="M5.6 16.85 H4 Q1.5 16.85 1.5 14.35 V3.85 Q1.5 1.35 4 1.35 H12.2 Q14.4 1.35 14.6 3.6" stroke="#48494e" stroke-width="1.25"/><rect x="5.2" y="4.45" width="13.2" height="16.9" rx="3" fill="#fff" stroke="#48494e" stroke-width="1.25"/><path d="M9.2 10.15 H11.8 M8.9 13.55 H14.7 M8.9 16.65 H14.7" stroke="#48494e" stroke-width="1.2"/></svg>
<svg class="b" style="left:1869px;top:436.0px;" width="8" height="20" viewBox="0 0 8 20" fill="none"><circle cx="4.2" cy="5.9" r="1.2" fill="#2a2c32"/><circle cx="4.2" cy="11.4" r="1.2" fill="#2a2c32"/><circle cx="4.2" cy="16.9" r="1.2" fill="#2a2c32"/></svg>
<div class="b" style="left:314px;top:466px;width:1577px;height:36px;background:#fff"></div>
<div class="b" style="left:314px;top:502px;width:1577px;height:1px;background:#e6e6e9"></div>
<div class="b" style="left:349px;top:466px;width:1px;height:36px;background:#e3e3e6"></div>
<div class="b" style="left:404px;top:466px;width:1px;height:36px;background:#e3e3e6"></div>
<div class="b" style="left:547px;top:466px;width:1px;height:36px;background:#e3e3e6"></div>
<div class="b" style="left:767px;top:466px;width:1px;height:36px;background:#e3e3e6"></div>
<div class="b" style="left:976px;top:466px;width:1px;height:36px;background:#e3e3e6"></div>
<div class="b" style="left:1072px;top:466px;width:1px;height:36px;background:#e3e3e6"></div>
<div class="b" style="left:1204px;top:466px;width:1px;height:36px;background:#e3e3e6"></div>
<div class="b" style="left:1380px;top:466px;width:1px;height:36px;background:#e3e3e6"></div>
<div class="b" style="left:1485px;top:466px;width:1px;height:36px;background:#e3e3e6"></div>
<div class="b" style="left:1661px;top:466px;width:1px;height:36px;background:#e3e3e6"></div>
<div class="b" style="left:1778px;top:466px;width:1px;height:36px;background:#e3e3e6"></div>
<div class="b" style="left:323px;top:476.5px;width:17px;height:17.0px;background:#fff;border:1px solid #b5b5b9;border-radius:4px"></div>
<div class="t" style="left:-123.5px;width:1000px;text-align:center;top:478.15px;font-size:14px;line-height:14px;font-weight:400;color:#2a2c32;letter-spacing:0px;">7</div>
<div class="b" style="left:419px;top:476px;width:0;height:27.6px;border-left:1px dotted #a8a8a8"></div>
<div class="b" style="left:420px;top:492px;width:11px;height:0;border-top:1px dotted #b8b8b8"></div>
<div class="t" style="left:438.6px;top:478.15px;font-size:14px;line-height:14px;font-weight:400;color:#2a2c32;letter-spacing:-0.918px;">GIENG1</div>
<div class="t" style="left:559.2px;top:478.15px;font-size:14px;line-height:14px;font-weight:400;color:#2a2c32;letter-spacing:0.04px;">Quyền sử dụng đất</div>
<div class="t" style="left:779.7px;top:478.15px;font-size:14px;line-height:14px;font-weight:400;color:#2a2c32;letter-spacing:0.04px;">Quyền sử dụng đất</div>
<div class="t" style="left:988.1px;top:478.15px;font-size:14px;line-height:14px;font-weight:400;color:#2a2c32;letter-spacing:-0.237px;">Đơnvị</div>
<div class="t" style="right:704.7px;top:478.15px;font-size:14px;line-height:14px;font-weight:400;color:#2a2c32;letter-spacing:0.1px;">1,00</div>
<div class="t" style="right:528.7px;top:478.15px;font-size:14px;line-height:14px;font-weight:400;color:#2a2c32;letter-spacing:0.07px;">1.000.000.000</div>
<div class="t" style="right:423.20000000000005px;top:478.15px;font-size:14px;line-height:14px;font-weight:400;color:#2a2c32;letter-spacing:0px;">0</div>
<div class="t" style="right:246.79999999999995px;top:478.15px;font-size:14px;line-height:14px;font-weight:400;color:#2a2c32;letter-spacing:0.07px;">1.000.000.000</div>
<div class="b" style="left:1662px;top:466px;width:116px;height:36px;overflow:hidden"><div class="t" style="left:44.40000000000009px;top:12.15px;font-size:14px;line-height:14px;color:#2a2c32;letter-spacing:0.56px">13/01/2025</div></div>
<svg class="b" style="left:1794px;top:474.0px;" width="20" height="20" viewBox="0 0 20 20" fill="none"><path d="M4.3 10.6 Q2.9 10.6 2.9 12 V15.6 Q2.9 17.4 4.7 17.4 H13.7 Q15.5 17.4 15.5 15.6 V12.4 Q15.5 10.8 13.9 10.7" stroke="#3b5bd6" stroke-width="1.4" stroke-linecap="round"/><path d="M5.7 15 L6.13 12.67 L14.48 4.24 L16.32 6.06 L7.97 14.49 Z" stroke="#3b5bd6" stroke-width="1.3" stroke-linejoin="round"/></svg>
<svg class="b" style="left:1828px;top:473.0px;" width="22" height="22" viewBox="0 0 22 22" fill="none"><path d="M5.6 16.85 H4 Q1.5 16.85 1.5 14.35 V3.85 Q1.5 1.35 4 1.35 H12.2 Q14.4 1.35 14.6 3.6" stroke="#48494e" stroke-width="1.25"/><rect x="5.2" y="4.45" width="13.2" height="16.9" rx="3" fill="#fff" stroke="#48494e" stroke-width="1.25"/><path d="M9.2 10.15 H11.8 M8.9 13.55 H14.7 M8.9 16.65 H14.7" stroke="#48494e" stroke-width="1.2"/></svg>
<svg class="b" style="left:1869px;top:474.0px;" width="8" height="20" viewBox="0 0 8 20" fill="none"><circle cx="4.2" cy="5.9" r="1.2" fill="#2a2c32"/><circle cx="4.2" cy="11.4" r="1.2" fill="#2a2c32"/><circle cx="4.2" cy="16.9" r="1.2" fill="#2a2c32"/></svg>
<div class="b" style="left:1778px;top:156px;width:1px;height:384px;background:#dcdce0"></div>
<div class="b" style="left:455px;top:283px;width:1.3000000000000114px;height:17.69999999999999px;background:#111"></div>
<div class="b" style="left:314px;top:503px;width:1583px;height:37px;background:#f3f3f5"></div>
<div class="b" style="left:349px;top:503px;width:1px;height:37px;background:#e3e3e6"></div>
<div class="b" style="left:404px;top:503px;width:1px;height:37px;background:#e3e3e6"></div>
<div class="b" style="left:547px;top:503px;width:1px;height:37px;background:#e3e3e6"></div>
<div class="b" style="left:767px;top:503px;width:1px;height:37px;background:#e3e3e6"></div>
<div class="b" style="left:976px;top:503px;width:1px;height:37px;background:#e3e3e6"></div>
<div class="b" style="left:1072px;top:503px;width:1px;height:37px;background:#e3e3e6"></div>
<div class="b" style="left:1204px;top:503px;width:1px;height:37px;background:#e3e3e6"></div>
<div class="b" style="left:1380px;top:503px;width:1px;height:37px;background:#e3e3e6"></div>
<div class="b" style="left:1485px;top:503px;width:1px;height:37px;background:#e3e3e6"></div>
<div class="b" style="left:1661px;top:503px;width:1px;height:37px;background:#e3e3e6"></div>
<div class="b" style="left:1778px;top:503px;width:1px;height:37px;background:#e3e3e6"></div>
<div class="t" style="right:704.5999999999999px;top:514.55px;font-size:14px;line-height:14px;font-weight:700;color:#2a2c32;letter-spacing:0.3px;">37,00</div>
<div class="t" style="right:528.7px;top:514.55px;font-size:14px;line-height:14px;font-weight:700;color:#2a2c32;letter-spacing:0.334px;">49.792.504.008</div>
<div class="t" style="right:423.20000000000005px;top:514.55px;font-size:14px;line-height:14px;font-weight:700;color:#2a2c32;letter-spacing:0.286px;">492.200.000</div>
<div class="t" style="right:247.4000000000001px;top:514.55px;font-size:14px;line-height:14px;font-weight:700;color:#2a2c32;letter-spacing:0.334px;">49.300.304.008</div>
<div class="b" style="left:314px;top:540px;width:1583px;height:7px;background:#f0f0f2"></div>
<div class="b" style="left:314px;top:540px;width:1028px;height:7px;background:#d0d0d2"></div>
<div class="b" style="left:1891px;top:234px;width:6px;height:269px;background:#f1f1f1"></div>
<div class="b" style="left:1891px;top:234px;width:6px;height:92px;background:#c2c2c4"></div>
<div class="b" style="left:314px;top:547px;width:1583px;height:39px;background:linear-gradient(180deg,#ffffff,#f9fafc)"></div>
<div class="b" style="left:314px;top:586px;width:1583px;height:1px;background:#b0b0b2"></div>
<div class="b" style="left:314px;top:587px;width:1583px;height:2px;background:#fff"></div>
<div class="b" style="left:314px;top:589px;width:1583px;height:1px;background:#b4b4b6"></div>
<div class="t" style="left:326px;top:561.15px;font-size:14px;line-height:14px;color:#2a2c32;letter-spacing:-0.1px">Tổng số: <b>35</b> bản ghi</div>
<div class="t" style="left:1585.3px;top:561.15px;font-size:14px;line-height:14px;font-weight:400;color:#2a2c32;letter-spacing:0.210px;">Số dòng/trang</div>
<div class="t" style="left:1688px;top:561.15px;font-size:14px;line-height:14px;font-weight:400;color:#2a2c32;letter-spacing:0px;">20</div>
<svg class="b" style="left:1719px;top:563px;" width="13" height="10" viewBox="0 0 13 10" fill="none"><path d="M2.6 3.4 L6.2 7 L9.8 3.4" stroke="#111" stroke-width="2.2" stroke-linecap="round" stroke-linejoin="round"/></svg>
<svg class="b" style="left:1764px;top:563px;" width="10" height="10" viewBox="0 0 10 10" fill="none"><path d="M8 2.6 L2.8 5.5 L8 8.4" stroke="#8a8c92" stroke-width="1.1"/></svg>
<div class="t" style="left:1784.9px;top:561.15px;font-size:14px;line-height:14px;font-weight:400;color:#2a2c32;letter-spacing:-0.212px;">Trang</div>
<div class="t" style="left:1836.5px;top:561.15px;font-size:14px;line-height:14px;font-weight:700;color:#2a2c32;letter-spacing:0px;">1</div>
<div class="t" style="left:1856.8px;top:561.15px;font-size:14px;line-height:14px;font-weight:400;color:#2a2c32;letter-spacing:0px;">2</div>
<svg class="b" style="left:1880px;top:563px;" width="10" height="10" viewBox="0 0 10 10" fill="none"><path d="M1.8 2.6 L7.6 5.5 L1.8 8.4" stroke="#1f2229" stroke-width="1.3"/></svg>
<div class="b" style="left:314px;top:590px;width:1583px;height:36px;background:#fff"></div>
<div class="t" style="left:331.7px;top:598.35px;font-size:14px;line-height:14px;font-weight:400;color:#3556cc;letter-spacing:0.097px;-webkit-text-stroke:0.2px #3556cc">Lịch sử biến động</div>
<div class="t" style="left:481px;top:598.35px;font-size:14px;line-height:14px;font-weight:400;color:#1f2229;letter-spacing:0.040px;">Thông tin kê khai</div>
<div class="t" style="left:624.8px;top:598.35px;font-size:14px;line-height:14px;font-weight:400;color:#1f2229;letter-spacing:0.05px;">Tệp đính kèm</div>
<div class="b" style="left:331px;top:621.7px;width:114px;height:2.7999999999999545px;background:#2f52cc"></div>
<div class="b" style="left:1871.2px;top:599px;width:16.8px;height:16.8px;border-radius:50%;background:#e2e3e8"></div>
<svg class="b" style="left:1871.2px;top:599px;" width="16.8" height="16.8" viewBox="0 0 16.8 16.8" fill="none"><path d="M4.8 6.8 L8.4 10.3 L12 6.8" stroke="#2f52cc" stroke-width="1.9" stroke-linecap="round" stroke-linejoin="round"/></svg>
<div class="b" style="left:314px;top:626px;width:1583px;height:35px;background:#f4f4f5"></div>
<div class="b" style="left:314px;top:661px;width:1583px;height:1px;background:#fdfdfe"></div>
<div class="b" style="left:346px;top:626px;width:1px;height:154px;background:#e3e3e6"></div>
<div class="b" style="left:478px;top:626px;width:1px;height:154px;background:#e3e3e6"></div>
<div class="b" style="left:643px;top:626px;width:1px;height:154px;background:#e3e3e6"></div>
<div class="b" style="left:808px;top:626px;width:1px;height:154px;background:#e3e3e6"></div>
<div class="b" style="left:973px;top:626px;width:1px;height:154px;background:#e3e3e6"></div>
<div class="b" style="left:1138px;top:626px;width:1px;height:154px;background:#e3e3e6"></div>
<div class="b" style="left:1303px;top:626px;width:1px;height:154px;background:#e3e3e6"></div>
<div class="b" style="left:1468px;top:626px;width:1px;height:154px;background:#e3e3e6"></div>
<div class="b" style="left:1633px;top:626px;width:1px;height:154px;background:#e3e3e6"></div>
<div class="b" style="left:1798px;top:626px;width:1px;height:154px;background:#e3e3e6"></div>
<div class="b" style="left:1800px;top:626px;width:1px;height:154px;background:#e8e8ea"></div>
<div class="b" style="left:314px;top:626px;width:32px;height:35px;overflow:hidden"><div class="t" style="right:20.30000000000001px;top:12.15px;font-size:14px;line-height:14px;font-weight:700;color:#26282e;letter-spacing:-0.25px">STT</div></div>
<div class="t" style="left:357.8px;top:638.15px;font-size:14px;line-height:14px;font-weight:700;color:#26282e;letter-spacing:-0.642px;">Số chứng từ</div>
<div class="t" style="left:60.75px;width:1000px;text-align:center;top:638.15px;font-size:14px;line-height:14px;font-weight:700;color:#26282e;letter-spacing:-0.516px;">Ngày chứng từ</div>
<div class="t" style="left:225.60000000000002px;width:1000px;text-align:center;top:638.15px;font-size:14px;line-height:14px;font-weight:700;color:#26282e;letter-spacing:-0.357px;">Ngày biến động</div>
<div class="t" style="left:820.3px;top:638.15px;font-size:14px;line-height:14px;font-weight:700;color:#26282e;letter-spacing:-0.495px;">Nội dung</div>
<div class="t" style="right:770.5999999999999px;top:638.15px;font-size:14px;line-height:14px;font-weight:700;color:#26282e;letter-spacing:-0.367px;">Nguyên giá</div>
<div class="t" style="right:605.3px;top:638.15px;font-size:14px;line-height:14px;font-weight:700;color:#26282e;letter-spacing:-0.357px;">Số tiền thực hiện</div>
<div class="t" style="right:440.79999999999995px;top:638.15px;font-size:14px;line-height:14px;font-weight:700;color:#26282e;letter-spacing:-0.126px;">Giá trị HM/KH</div>
<div class="t" style="right:275.5px;top:638.15px;font-size:14px;line-height:14px;font-weight:700;color:#26282e;letter-spacing:-0.081px;">HM/KH lũy kế</div>
<div class="t" style="right:110.70000000000005px;top:638.15px;font-size:14px;line-height:14px;font-weight:700;color:#26282e;letter-spacing:-0.300px;">Giá trị còn lại</div>
<div class="t" style="left:1816px;top:638.15px;font-size:14px;line-height:14px;font-weight:700;color:#26282e;letter-spacing:-0.636px;">Chức năng</div>
<div class="b" style="left:314px;top:662px;width:1583px;height:45px;background:#e7eafc"></div>
<div class="b" style="left:346px;top:662px;width:1px;height:44px;background:#e3e3e6"></div>
<div class="b" style="left:478px;top:662px;width:1px;height:44px;background:#e3e3e6"></div>
<div class="b" style="left:643px;top:662px;width:1px;height:44px;background:#e3e3e6"></div>
<div class="b" style="left:808px;top:662px;width:1px;height:44px;background:#e3e3e6"></div>
<div class="b" style="left:973px;top:662px;width:1px;height:44px;background:#e3e3e6"></div>
<div class="b" style="left:1138px;top:662px;width:1px;height:44px;background:#e3e3e6"></div>
<div class="b" style="left:1303px;top:662px;width:1px;height:44px;background:#e3e3e6"></div>
<div class="b" style="left:1468px;top:662px;width:1px;height:44px;background:#e3e3e6"></div>
<div class="b" style="left:1633px;top:662px;width:1px;height:44px;background:#e3e3e6"></div>
<div class="b" style="left:1798px;top:662px;width:1px;height:44px;background:#e3e3e6"></div>
<div class="b" style="left:314px;top:662px;width:32px;height:44px;overflow:hidden"><div class="t" style="right:30px;top:16.15px;font-size:14px;line-height:14px;color:#3b5bd6">1</div></div>
<div class="t" style="left:60.450000000000045px;width:1000px;text-align:center;top:678.15px;font-size:14px;line-height:14px;font-weight:400;color:#2a2c32;letter-spacing:0.562px;">31/12/2025</div>
<div class="t" style="left:225.60000000000002px;width:1000px;text-align:center;top:678.15px;font-size:14px;line-height:14px;font-weight:400;color:#2a2c32;letter-spacing:0.562px;">31/12/2025</div>
<div class="t" style="left:820.3px;top:678.15px;font-size:14px;line-height:14px;font-weight:400;color:#2a2c32;letter-spacing:-0.143px;">Chuẩn hóa dữ liệu tài ...</div>
<div class="b" style="left:314px;top:707px;width:1583px;height:36px;background:#fff"></div>
<div class="b" style="left:314px;top:743px;width:1583px;height:1px;background:#e6e6e9"></div>
<div class="b" style="left:346px;top:707px;width:1px;height:36px;background:#e3e3e6"></div>
<div class="b" style="left:478px;top:707px;width:1px;height:36px;background:#e3e3e6"></div>
<div class="b" style="left:643px;top:707px;width:1px;height:36px;background:#e3e3e6"></div>
<div class="b" style="left:808px;top:707px;width:1px;height:36px;background:#e3e3e6"></div>
<div class="b" style="left:973px;top:707px;width:1px;height:36px;background:#e3e3e6"></div>
<div class="b" style="left:1138px;top:707px;width:1px;height:36px;background:#e3e3e6"></div>
<div class="b" style="left:1303px;top:707px;width:1px;height:36px;background:#e3e3e6"></div>
<div class="b" style="left:1468px;top:707px;width:1px;height:36px;background:#e3e3e6"></div>
<div class="b" style="left:1633px;top:707px;width:1px;height:36px;background:#e3e3e6"></div>
<div class="b" style="left:1798px;top:707px;width:1px;height:36px;background:#e3e3e6"></div>
<div class="b" style="left:314px;top:707px;width:32px;height:36px;overflow:hidden"><div class="t" style="right:30px;top:9.95px;font-size:14px;line-height:14px;color:#2a2c32">2</div></div>
<div class="t" style="left:357.8px;top:716.95px;font-size:14px;line-height:14px;font-weight:400;color:#3a64c8;letter-spacing:-0.076px;">KK000023</div>
<div class="t" style="left:60.450000000000045px;width:1000px;text-align:center;top:716.95px;font-size:14px;line-height:14px;font-weight:400;color:#2a2c32;letter-spacing:0.562px;">31/12/2025</div>
<div class="t" style="left:225.60000000000002px;width:1000px;text-align:center;top:716.95px;font-size:14px;line-height:14px;font-weight:400;color:#2a2c32;letter-spacing:0.562px;">31/12/2025</div>
<div class="t" style="left:820.3px;top:716.95px;font-size:14px;line-height:14px;font-weight:400;color:#2a2c32;letter-spacing:0.04px;">Kiểm kê</div>
<div class="t" style="right:770.5999999999999px;top:716.95px;font-size:14px;line-height:14px;font-weight:400;color:#2a2c32;letter-spacing:0.217px;">11.500.000</div>
<div class="t" style="right:605.5px;top:716.95px;font-size:14px;line-height:14px;font-weight:400;color:#2a2c32;letter-spacing:0px;">0</div>
<div class="t" style="right:440.5px;top:716.95px;font-size:14px;line-height:14px;font-weight:400;color:#2a2c32;letter-spacing:0px;">0</div>
<div class="t" style="right:275.5px;top:716.95px;font-size:14px;line-height:14px;font-weight:400;color:#2a2c32;letter-spacing:0px;">0</div>
<div class="t" style="right:110.70000000000005px;top:716.95px;font-size:14px;line-height:14px;font-weight:400;color:#2a2c32;letter-spacing:0.217px;">11.500.000</div>
<div class="b" style="left:314px;top:744px;width:1583px;height:36px;background:#fff"></div>
<div class="b" style="left:314px;top:780px;width:1583px;height:1px;background:#e6e6e9"></div>
<div class="b" style="left:346px;top:744px;width:1px;height:36px;background:#e3e3e6"></div>
<div class="b" style="left:478px;top:744px;width:1px;height:36px;background:#e3e3e6"></div>
<div class="b" style="left:643px;top:744px;width:1px;height:36px;background:#e3e3e6"></div>
<div class="b" style="left:808px;top:744px;width:1px;height:36px;background:#e3e3e6"></div>
<div class="b" style="left:973px;top:744px;width:1px;height:36px;background:#e3e3e6"></div>
<div class="b" style="left:1138px;top:744px;width:1px;height:36px;background:#e3e3e6"></div>
<div class="b" style="left:1303px;top:744px;width:1px;height:36px;background:#e3e3e6"></div>
<div class="b" style="left:1468px;top:744px;width:1px;height:36px;background:#e3e3e6"></div>
<div class="b" style="left:1633px;top:744px;width:1px;height:36px;background:#e3e3e6"></div>
<div class="b" style="left:1798px;top:744px;width:1px;height:36px;background:#e3e3e6"></div>
<div class="b" style="left:314px;top:744px;width:32px;height:36px;overflow:hidden"><div class="t" style="right:30px;top:11.95px;font-size:14px;line-height:14px;color:#2a2c32">3</div></div>
<div class="t" style="left:357.8px;top:755.95px;font-size:14px;line-height:14px;font-weight:400;color:#3a64c8;letter-spacing:-0.171px;">GT000031</div>
<div class="t" style="left:60.450000000000045px;width:1000px;text-align:center;top:755.95px;font-size:14px;line-height:14px;font-weight:400;color:#2a2c32;letter-spacing:0.562px;">31/12/2025</div>
<div class="t" style="left:225.60000000000002px;width:1000px;text-align:center;top:755.95px;font-size:14px;line-height:14px;font-weight:400;color:#2a2c32;letter-spacing:0.562px;">31/12/2025</div>
<div class="t" style="left:820.3px;top:755.95px;font-size:14px;line-height:14px;font-weight:400;color:#2a2c32;letter-spacing:0.04px;">Ghi tăng</div>
<div class="t" style="right:770.5999999999999px;top:755.95px;font-size:14px;line-height:14px;font-weight:400;color:#2a2c32;letter-spacing:0.217px;">11.500.000</div>
<div class="t" style="right:605.5px;top:755.95px;font-size:14px;line-height:14px;font-weight:400;color:#2a2c32;letter-spacing:0px;">0</div>
<div class="t" style="right:440.5px;top:755.95px;font-size:14px;line-height:14px;font-weight:400;color:#2a2c32;letter-spacing:0px;">0</div>
<div class="t" style="right:275.5px;top:755.95px;font-size:14px;line-height:14px;font-weight:400;color:#2a2c32;letter-spacing:0px;">0</div>
<div class="t" style="right:110.70000000000005px;top:755.95px;font-size:14px;line-height:14px;font-weight:400;color:#2a2c32;letter-spacing:0.217px;">11.500.000</div>
<div class="b" style="left:314px;top:781px;width:1583px;height:12px;background:#fff"></div>
<div class="b" style="left:1833px;top:670.2px;width:29.5px;height:29.5px;border-radius:50%;background:#fff;box-shadow:0 1px 4px rgba(0,0,0,0.28)"></div>
<svg class="b" style="left:1838.6px;top:675.8px;" width="18" height="18" viewBox="0 0 18 18" fill="none"><path d="M4.9 7 C4.9 4.2 6.6 2.7 8.8 2.7 C11 2.7 12.7 4.2 12.7 7" stroke="#d4532b" stroke-width="1.5"/><path d="M1.8 7.1 H16.4" stroke="#d4532b" stroke-width="1.5" stroke-linecap="round"/><path d="M3.3 7.3 V13.9 C3.3 15.4 4.2 16.3 5.7 16.3 H12.3 C13.8 16.3 14.8 15.4 14.8 13.9 V7.3" stroke="#d4532b" stroke-width="1.5"/><path d="M7.4 9.9 V13.3 M10.6 9.9 V13.3" stroke="#d4532b" stroke-width="1.5" stroke-linecap="round"/></svg>
<svg class="b" style="left:1838.6px;top:753px;" width="18" height="18" viewBox="0 0 18 18" fill="none"><path d="M4.9 7 C4.9 4.2 6.6 2.7 8.8 2.7 C11 2.7 12.7 4.2 12.7 7" stroke="#d4532b" stroke-width="1.5"/><path d="M1.8 7.1 H16.4" stroke="#d4532b" stroke-width="1.5" stroke-linecap="round"/><path d="M3.3 7.3 V13.9 C3.3 15.4 4.2 16.3 5.7 16.3 H12.3 C13.8 16.3 14.8 15.4 14.8 13.9 V7.3" stroke="#d4532b" stroke-width="1.5"/><path d="M7.4 9.9 V13.3 M10.6 9.9 V13.3" stroke="#d4532b" stroke-width="1.5" stroke-linecap="round"/></svg>
<div class="b" style="left:344px;top:662px;width:1537px;height:45px;border:3px solid #d21f26"></div>
<div class="b" style="left:1816px;top:707.5px;width:50.5px;height:33.5px;border-radius:3px;background:#3a3a3c"></div>
<div class="t" style="left:1341.2px;width:1000px;text-align:center;top:716.65px;font-size:14px;line-height:14px;font-weight:400;color:#fff;letter-spacing:0.693px;-webkit-text-stroke:0.3px #fff">Xóa</div>
<svg class="b" style="left:1891px;top:593px;" width="8" height="48" viewBox="0 0 8 48" fill="none"><path d="M7.5 0.5 H1.5 C0.9 0.5 0.5 0.9 0.5 1.5 V41 L7 47" fill="#f7f7f9" stroke="#c4c4c8" stroke-width="1"/></svg>
</body></html>
